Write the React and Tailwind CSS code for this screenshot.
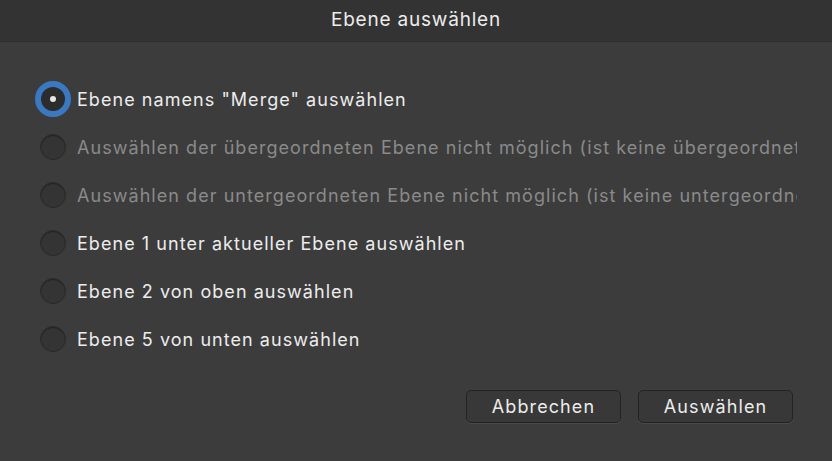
import React, { useState } from 'react';

const options = [
  { label: 'Ebene namens "Merge" auswählen', disabled: false },
  { label: 'Auswählen der übergeordneten Ebene nicht möglich (ist keine übergeordnete Ebene vorhanden)', disabled: true },
  { label: 'Auswählen der untergeordneten Ebene nicht möglich (ist keine untergeordnete Ebene vorhanden)', disabled: true },
  { label: 'Ebene 1 unter aktueller Ebene auswählen', disabled: false },
  { label: 'Ebene 2 von oben auswählen', disabled: false },
  { label: 'Ebene 5 von unten auswählen', disabled: false },
];

const Radio = ({ checked }) => (
  <span className="w-[36px] h-[36px] flex items-center justify-center shrink-0">
    {checked ? (
      <span className="w-[36px] h-[36px] rounded-full border-[6px] border-[#3a78c2] flex items-center justify-center bg-[#2c2c2c]">
        <span className="w-[6px] h-[6px] rounded-full bg-[#e6e6e6]"></span>
      </span>
    ) : (
      <span className="w-[26px] h-[26px] rounded-full bg-[#343434] border border-[#2a2a2a] shadow-[inset_0_1px_1px_rgba(0,0,0,0.35)]"></span>
    )}
  </span>
);

export default function App() {
  const [selected, setSelected] = useState(0);

  return (
    <div className="w-[832px] h-[461px] bg-[#3c3c3c] flex flex-col overflow-hidden" style={{ fontFamily: 'Inter, "Noto Sans", sans-serif' }}>
      <div className="h-[42px] bg-[#333333] flex items-center justify-center shrink-0 border-b border-[#2f2f2f]">
        <span className="text-[19px] text-[#ececec] tracking-[0.8px]">Ebene auswählen</span>
      </div>
      <div className="flex flex-col pl-[35px] w-[797px] mt-[39px] gap-[12px]">
        {options.map((opt, i) => (
          <div
            key={i}
            className="flex items-center h-[36px] cursor-default"
            onClick={() => !opt.disabled && setSelected(i)}
          >
            <Radio checked={selected === i} />
            <span className={`ml-[6px] text-[18px] tracking-[1.05px] whitespace-nowrap overflow-hidden ${opt.disabled ? 'text-[#8a8a8a]' : 'text-[#ececec]'}`}>
              {opt.label}
            </span>
          </div>
        ))}
      </div>
      <div className="flex justify-end gap-[17px] pr-[39px] mt-[33px]">
        <button className="w-[155px] h-[33px] rounded-[5px] border border-[#232323] bg-[#383838] text-[#ececec] text-[18px] tracking-[1.1px] shadow-[0_1px_0_#4a4a4a]">
          Abbrechen
        </button>
        <button className="w-[155px] h-[33px] rounded-[5px] border border-[#232323] bg-[#383838] text-[#ececec] text-[18px] tracking-[1.1px] shadow-[0_1px_0_#4a4a4a]">
          Auswählen
        </button>
      </div>
    </div>
  );
}
